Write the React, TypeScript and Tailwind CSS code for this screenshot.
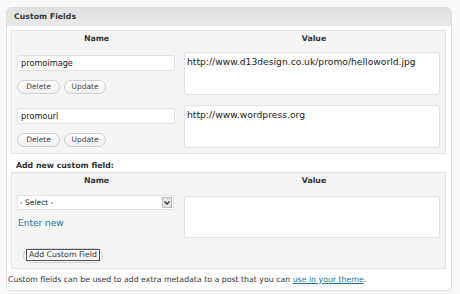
function PillButton({ label, width }: { label: string; width: string }) {
  return (
    <button
      className={`${width} h-[14px] rounded-full border border-[#cfcfcf] bg-gradient-to-b from-white to-[#f0f0f0] text-[7.5px] leading-none text-[#464646] flex items-center justify-center`}
    >
      {label}
    </button>
  );
}

function FieldRow({ name, value }: { name: string; value: string }) {
  return (
    <div className="flex h-[53px]">
      <div className="w-[169px] pl-[5px] pt-[8px]">
        <div className="w-[158px] h-[16px] bg-white border border-[#e3e3e3] rounded-[2px] px-[3px] flex items-center text-[8.2px] text-[#222]">
          {name}
        </div>
        <div className="flex gap-[4px] mt-[9px]">
          <PillButton label="Delete" width="w-[43px]" />
          <PillButton label="Update" width="w-[42px]" />
        </div>
      </div>
      <div className="pl-[3px] pt-[5px]">
        <div className="w-[256px] h-[43px] bg-white border border-[#e3e3e3] rounded-[2px] px-[2px] pt-[3px] text-[9.2px] leading-[11px] text-[#222]">
          {value}
        </div>
      </div>
    </div>
  );
}

function TableHead() {
  return (
    <div className="flex h-[16px] items-center text-[7.8px] font-bold text-[#333]">
      <div className="w-[169px] text-center">Name</div>
      <div className="flex-1 text-center pl-[2px]">Value</div>
    </div>
  );
}

export default function App() {
  return (
    <div className="w-[460px] h-[294px] bg-[#f9f9f9] pt-[7px] pl-[6px] font-['DejaVu_Sans',sans-serif]">
      <div className="w-[446px] h-[284px] border border-[#dfdfdf] rounded-[5px] bg-white">
        <div className="h-[18px] bg-gradient-to-b from-[#e0e0e0] to-[#e9e9e9] rounded-t-[4px] flex items-center pl-[7px] text-[7.8px] font-bold text-[#3a3a3a]">
          Custom Fields
        </div>
        <div className="pl-[4px] pt-[4px]">
          <div className="w-[435px] border border-[#e3e3e3] bg-[#f5f5f5]">
            <TableHead />
            <FieldRow name="promoimage" value="http://www.d13design.co.uk/promo/helloworld.jpg" />
            <FieldRow name="promourl" value="http://www.wordpress.org" />
          </div>
          <div className="h-[18px] flex items-center pt-[6px] pl-[5px] text-[7.8px] font-bold text-[#333]">
            Add new custom field:
          </div>
          <div className="w-[435px] h-[97px] border border-[#e3e3e3] bg-[#f5f5f5]">
            <TableHead />
            <div className="flex">
              <div className="w-[169px] pl-[5px] pt-[6px]">
                <div className="w-[157px] h-[15px] bg-white border border-[#e3e3e3] flex items-center justify-between pl-[2px] pr-[1px] text-[7.5px] text-[#222]">
                  <span>- Select -</span>
                  <span className="w-[10px] h-[11px] bg-[#e4e4e4] border border-[#bdbdbd] flex items-center justify-center">
                    <svg width="6" height="4" viewBox="0 0 6 4">
                      <path d="M0.5 0.5 L3 3 L5.5 0.5" stroke="#333" strokeWidth="1.3" fill="none" />
                    </svg>
                  </span>
                </div>
                <div className="mt-[7px] pl-[1px] text-[9px] text-[#21759b]">Enter new</div>
                <div className="mt-[17px] pl-[6px]">
                  <button className="w-[80px] h-[15px] rounded-full border border-[#d3d3d3] bg-gradient-to-b from-white to-[#f0f0f0] flex items-center justify-center">
                    <span className="border border-[#555] px-[2px] text-[7.8px] leading-[10px] text-[#333]">
                      Add Custom Field
                    </span>
                  </button>
                </div>
              </div>
              <div className="pl-[3px] pt-[7px]">
                <div className="w-[256px] h-[42px] bg-white border border-[#e3e3e3] rounded-[2px]" />
              </div>
            </div>
          </div>
          <div className="h-[20px] flex items-center -ml-[4px] pl-[1px] pt-[1px] text-[7.8px] text-[#333]">
            <span>
              Custom fields can be used to add extra metadata to a post that you can{" "}
              <span className="text-[#21759b] underline">use in your theme</span>.
            </span>
          </div>
        </div>
      </div>
    </div>
  );
}
